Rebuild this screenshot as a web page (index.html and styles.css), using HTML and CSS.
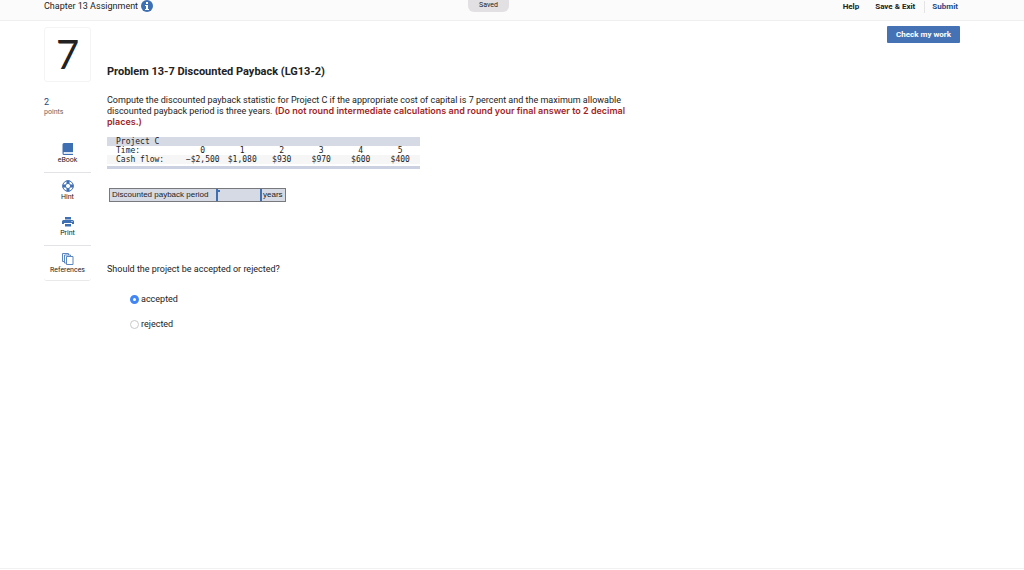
FILE: index.html
```html
<!DOCTYPE html>
<html lang="en">
<head>
<meta charset="utf-8">
<meta name="viewport" content="width=device-width, initial-scale=1">
<title>Chapter 13 Assignment</title>
<link rel="stylesheet" href="styles.css">
</head>
<body>
<header class="topbar">
  <div class="topbar-title">
    <span>Chapter 13 Assignment</span>
    <button class="info" type="button" aria-label="Assignment information">
      <svg viewBox="0 0 12 12" width="12" height="12"><circle cx="6" cy="6" r="6" fill="#3e6fb3"/><path d="M5 2h2v2H5zM4 5h3v4h1v1H4V9h1V6H4z" fill="#fff"/></svg>
    </button>
  </div>
  <span class="saved">Saved</span>
  <nav class="topbar-nav">
    <a href="#help">Help</a>
    <a href="#exit">Save &amp; Exit</a>
    <a class="submit" href="#submit">Submit</a>
  </nav>
</header>
<div class="page">
  <aside class="sidebar">
    <div class="number">7</div>
    <div class="points"><span class="points-value">2</span><span>points</span></div>
    <nav class="tools">
      <a class="tool" href="#ebook">
        <svg viewBox="0 0 12 12" width="12" height="12"><path d="M2 0h9v9H2.500a1 1 0 0 0 0 2H11v1H2a1.500 1.500 0 0 1-1.500-1.500v-9A1.500 1.500 0 0 1 2 0z" fill="#3e6fb3"/><path d="M2.500 9.500H11v1H2.500z" fill="#b9cbe5"/></svg>
        <span>eBook</span>
      </a>
      <a class="tool tool-hint" href="#hint">
        <svg viewBox="0 0 12 12" width="12" height="12"><circle cx="6" cy="6" r="5.300" fill="#fff" stroke="#3e6fb3"/><path d="M4.500.6h3v3h-3zM4.500 8.400h3v3h-3zM.6 4.500h3v3h-3zM8.400 4.500h3v3h-3z" fill="#3e6fb3"/><circle cx="6" cy="6" r="2.600" fill="#fff" stroke="#3e6fb3"/></svg>
        <span>Hint</span>
      </a>
      <a class="tool tool-print" href="#print">
        <svg viewBox="0 0 12 12" width="12" height="12"><path d="M3 1h6v2.500H3zM1.500 4h9A1.500 1.500 0 0 1 12 5.500V8h-2V7H2v1H0V5.500A1.500 1.500 0 0 1 1.500 4zM3 8h6v2.500H3z" fill="#3e6fb3"/><path d="M9.500 5h1v1h-1z" fill="#fff"/></svg>
        <span>Print</span>
      </a>
      <a class="tool" href="#references">
        <svg viewBox="0 0 12 12" width="12" height="12" fill="#fff" stroke="#5c86bf"><path d="M.5.5h6v8h-6z"/><path d="M2.500 2h6v8h-6z"/><path d="M4.500 3.500h6.500v8H4.500z"/></svg>
        <span>References</span>
      </a>
    </nav>
  </aside>
  <main class="content">
    <div class="actions"><button class="check" type="button">Check my work</button></div>
    <h1>Problem 13-7 Discounted Payback (LG13-2)</h1>
    <p class="question">Compute the discounted payback statistic for Project C if the appropriate cost of capital is 7 percent and the maximum allowable discounted payback period is three years. <strong>(Do not round intermediate calculations and round your final answer to 2 decimal places.)</strong></p>
    <table class="flows">
      <colgroup><col class="flows-label"><col span="6"></colgroup>
      <thead><tr><th colspan="7" scope="colgroup">Project C</th></tr></thead>
      <tbody>
        <tr><th scope="row">Time:</th><td>0</td><td>1</td><td>2</td><td>3</td><td>4</td><td>5</td></tr>
        <tr class="shaded"><th scope="row">Cash flow:</th><td>−$2,500</td><td>$1,080</td><td>$930</td><td>$970</td><td>$600</td><td>$400</td></tr>
      </tbody>
    </table>
    <div class="answer">
      <label for="period">Discounted payback period</label>
      <span class="entry"><input id="period" type="text"></span>
      <span class="unit">years</span>
    </div>
    <fieldset class="choices">
      <legend>Should the project be accepted or rejected?</legend>
      <label><input type="radio" name="decision" checked><span>accepted</span></label>
      <label><input type="radio" name="decision"><span>rejected</span></label>
    </fieldset>
  </main>
</div>
<footer class="footer"></footer>
</body>
</html>
```
FILE: styles.css
```css
* { box-sizing: border-box; }
body {
  margin: 0;
  min-height: 100vh;
  display: flex;
  flex-direction: column;
  background: #fff;
  color: #222;
  font: 9px/11px Roboto, "Open Sans", sans-serif;
}
a { color: inherit; text-decoration: none; }
button, input { font: inherit; }
.topbar {
  display: grid;
  grid-template-columns: 17fr auto 18fr;
  align-items: start;
  height: 21px;
  padding: 0 66px 0 44px;
  background: #fbfbfb;
  border-bottom: 1px solid #efefef;
}
.topbar-title { display: flex; align-items: center; gap: 3px; line-height: 12px; }
.info { display: flex; padding: 0; border: 0; background: none; }
.saved {
  width: 41px;
  height: 12px;
  border-radius: 0 0 6px 6px;
  background: #e2e0e3;
  font-size: 7px;
  line-height: 11px;
  text-align: center;
}
.topbar-nav { display: flex; justify-content: flex-end; gap: 16px; padding-top: 1px; font-size: 8px; font-weight: 700; line-height: 12px; }
.submit { margin-left: -7px; padding-left: 7px; border-left: 1px solid #e4e4e4; color: #1f4a86; }
.page { display: flex; flex: 1; gap: 16px; padding: 5px 64px 0 44px; }
.sidebar { width: 47px; flex: none; padding-top: 1px; }
.number {
  height: 55px;
  border: 1px solid #f4f4f4;
  border-radius: 3px;
  font-family: Lato, sans-serif;
  font-size: 40px;
  line-height: 52px;
  text-align: center;
}
.points { display: flex; flex-direction: column; margin: 15px 0 19px; font-size: 7px; line-height: 10px; color: #666; }
.points-value { color: #1f4a86; font-size: 9px; }
.tools { border: solid #e9e9e9; border-width: 0 0 1px; border-radius: 3px; font-size: 7px; line-height: 9px; }
.tool { display: flex; flex-direction: column; align-items: center; gap: 1px; padding: 7px 0; }
.tool:last-child { padding-bottom: 5px; }
.tool-hint { border-top: 1px solid #e2e3e6; }
.tool-print { border-bottom: 1px solid #e2e3e6; }
.content { flex: 1; min-width: 0; }
.actions { display: flex; justify-content: flex-end; }
.check { height: 17px; padding: 0 9px; border: 0; border-radius: 1px; background: #4472b4; color: #fff; font-size: 8px; font-weight: 700; }
h1 { margin: 22px 0 16px; font-size: 11px; line-height: 14px; }
.question { max-width: 524px; margin: 0 0 9px; line-height: 11px; }
.question strong { color: #a31f1f; font-family: Inter, sans-serif; font-weight: 600; line-height: 9px; }
.flows {
  width: 313px;
  table-layout: fixed;
  border-collapse: collapse;
  border-bottom: 3px solid #cbd1e0;
  font: 8px/9px "DejaVu Sans Mono", monospace;
}
.flows-label { width: 76px; }
.flows thead { background: #d6dae4; }
.flows th { padding: 0 0 0 9px; font-weight: 400; text-align: left; }
.flows td { padding: 0; text-align: center; }
.shaded { background: linear-gradient(#f6f6f6 9px, #fff 9px); }
.shaded th, .shaded td { padding-bottom: 2px; }
.answer {
  display: inline-flex;
  margin: 19px 0 0 2px;
  border: 1px solid #77797d;
  background: #d6dae4;
  font: 8px/12px "Liberation Sans", Arial, sans-serif;
}
.answer label { width: 106px; padding-left: 2px; }
.entry { position: relative; width: 46px; border: solid #3e6fb3; border-width: 0 2px 0 2px; }
.entry::before { content: ""; position: absolute; top: 1px; left: 0; width: 2px; height: 2px; background: #3e6fb3; }
.entry input { display: block; width: 100%; height: 12px; padding: 0 2px; border: 0; background: none; }
.unit { padding: 0 2px 0 1px; }
.choices { margin: 62px 0 0; padding: 0; border: 0; }
.choices legend { margin-bottom: 5px; padding: 0; }
.choices label { display: flex; align-items: center; gap: 2px; margin: 14px 0 0 23px; }
.choices input {
  appearance: none;
  width: 9px;
  height: 9px;
  margin: 0;
  border: 1px solid #c9c9c9;
  border-radius: 50%;
  background: #fff;
}
.choices input:checked { border: 3px solid #4285f4; }
.footer { height: 2px; border-top: 1px solid #f1f1f1; }
```
